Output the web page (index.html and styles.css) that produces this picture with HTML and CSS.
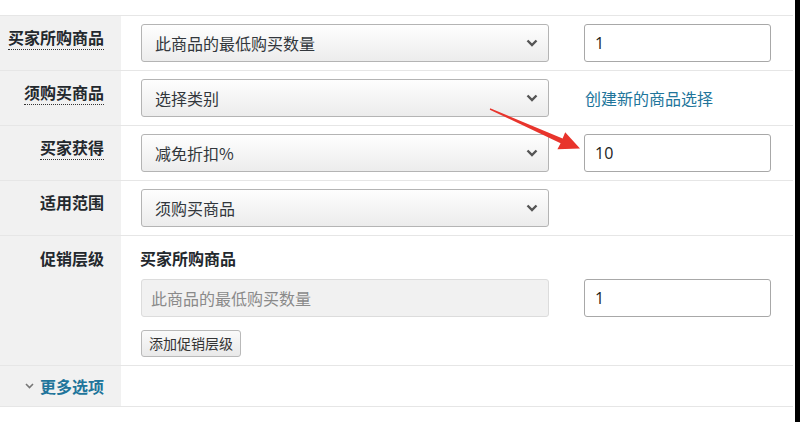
FILE: index.html
```html
<!DOCTYPE html>
<html lang="zh-CN">
<head>
<meta charset="utf-8">
<title>促销设置</title>
<link rel="stylesheet" href="styles.css">
</head>
<body>
<div class="page">
  <div class="form">
    <div class="row">
      <div class="label"><span class="tip">买家所购商品</span></div>
      <div class="field">
        <div class="select"><span>此商品的最低购买数量</span>
          <svg class="chev" width="12" height="8" viewBox="0 0 12 8"><path d="M1.5 1.5 L6 6 L10.5 1.5" fill="none" stroke="#555" stroke-width="2.4"/></svg>
        </div>
        <div class="input">1</div>
      </div>
    </div>
    <div class="row">
      <div class="label"><span class="tip">须购买商品</span></div>
      <div class="field">
        <div class="select"><span>选择类别</span>
          <svg class="chev" width="12" height="8" viewBox="0 0 12 8"><path d="M1.5 1.5 L6 6 L10.5 1.5" fill="none" stroke="#555" stroke-width="2.4"/></svg>
        </div>
        <a class="link">创建新的商品选择</a>
      </div>
    </div>
    <div class="row">
      <div class="label"><span class="tip">买家获得</span></div>
      <div class="field">
        <div class="select"><span>减免折扣%</span>
          <svg class="chev" width="12" height="8" viewBox="0 0 12 8"><path d="M1.5 1.5 L6 6 L10.5 1.5" fill="none" stroke="#555" stroke-width="2.4"/></svg>
        </div>
        <div class="input">10</div>
      </div>
    </div>
    <div class="row">
      <div class="label"><span>适用范围</span></div>
      <div class="field">
        <div class="select"><span>须购买商品</span>
          <svg class="chev" width="12" height="8" viewBox="0 0 12 8"><path d="M1.5 1.5 L6 6 L10.5 1.5" fill="none" stroke="#555" stroke-width="2.4"/></svg>
        </div>
      </div>
    </div>
    <div class="row tier-row">
      <div class="label tier-label"><span>促销层级</span></div>
      <div class="field tier">
        <div class="tier-title">买家所购商品</div>
        <div class="tier-inputs">
          <div class="select disabled"><span>此商品的最低购买数量</span></div>
          <div class="input">1</div>
        </div>
        <div class="btn">添加促销层级</div>
      </div>
    </div>
    <div class="row more-row">
      <div class="label more-label">
        <svg class="more-chev" width="9" height="6" viewBox="0 0 9 6"><path d="M1 1 L4.5 4.5 L8 1" fill="none" stroke="#777" stroke-width="1.6"/></svg>
        <span class="more">更多选项</span>
      </div>
      <div class="field"></div>
    </div>
  </div>
  <svg class="arrow" width="800" height="422" viewBox="0 0 800 422">
    <polygon points="490.2,108.3 562.6,138.4 565.2,132.2 580,148.5 557.4,149.2 560.6,143.2 489.8,109.7" fill="#e8342c"/>
  </svg>
</div>
</body>
</html>
```

FILE: styles.css
```css
html, body {
  margin: 0;
  padding: 0;
  background: #000;
}
body {
  font-family: "Noto Sans CJK SC", "Noto Sans", sans-serif;
  color: #23282d;
}
.page {
  position: relative;
  width: 795px;
  height: 422px;
  background: #fff;
  padding-top: 15px;
  box-sizing: border-box;
  overflow: hidden;
}
.form {
  width: 793px;
  border-top: 1px solid #e6e6e6;
}
.row {
  display: flex;
  height: 55px;
  border-bottom: 1px solid #e6e6e6;
  box-sizing: border-box;
}
.label {
  width: 121px;
  flex: none;
  background: #f1f1f1;
  text-align: right;
  padding: 9px 17px 0 0;
  box-sizing: border-box;
  font-size: 16px;
  font-weight: 700;
  line-height: 24px;
  color: #23282d;
}
.tip {
  border-bottom: 1px dotted #333;
}
.field {
  flex: 1;
  display: flex;
  align-items: flex-start;
  padding: 8px 0 0 20px;
}
.select {
  width: 408px;
  height: 38px;
  box-sizing: border-box;
  border: 1px solid #b4b4b4;
  border-radius: 3px;
  background: linear-gradient(#fefefe, #ececec);
  display: flex;
  align-items: center;
  justify-content: space-between;
  padding: 0 10px 0 13px;
  font-size: 16px;
  color: #32373c;
}
.select.disabled {
  background: #f1f1f1;
  border-color: #dcdcdc;
  color: #8a8a8a;
  padding-left: 9px;
}
.chev {
  display: block;
}
.input {
  width: 187px;
  height: 38px;
  margin-left: 35px;
  box-sizing: border-box;
  border: 1px solid #a8a8a8;
  border-radius: 3px;
  background: #fff;
  padding: 0 10px;
  font-family: "Open Sans", "Noto Sans", sans-serif;
  font-size: 16px;
  line-height: 36px;
  color: #222;
}
.link {
  margin-left: 36px;
  font-size: 16px;
  line-height: 38px;
  color: #21759b;
}
.tier-row {
  height: 130px;
}
.tier-label {
  padding-top: 10px;
}
.field.tier {
  flex-direction: column;
  padding-top: 10px;
}
.tier-title {
  font-size: 16px;
  font-weight: 700;
  line-height: 24px;
  margin-left: -1px;
}
.tier-inputs {
  display: flex;
  margin-top: 9px;
}
.btn {
  margin-top: 13px;
  height: 27px;
  box-sizing: border-box;
  padding: 0 7px;
  border: 1px solid #b9b9b9;
  border-radius: 3px;
  background: linear-gradient(#fafafa, #e9e9e9);
  font-size: 14px;
  line-height: 25px;
  color: #333;
}
.more-row {
  height: 41px;
}
.more-label {
  display: flex;
  align-items: center;
  justify-content: flex-end;
  padding-top: 0;
  gap: 6px;
}
.more {
  color: #21759b;
  font-weight: 700;
}
.arrow {
  position: absolute;
  left: 0;
  top: 0;
  pointer-events: none;
}
```
